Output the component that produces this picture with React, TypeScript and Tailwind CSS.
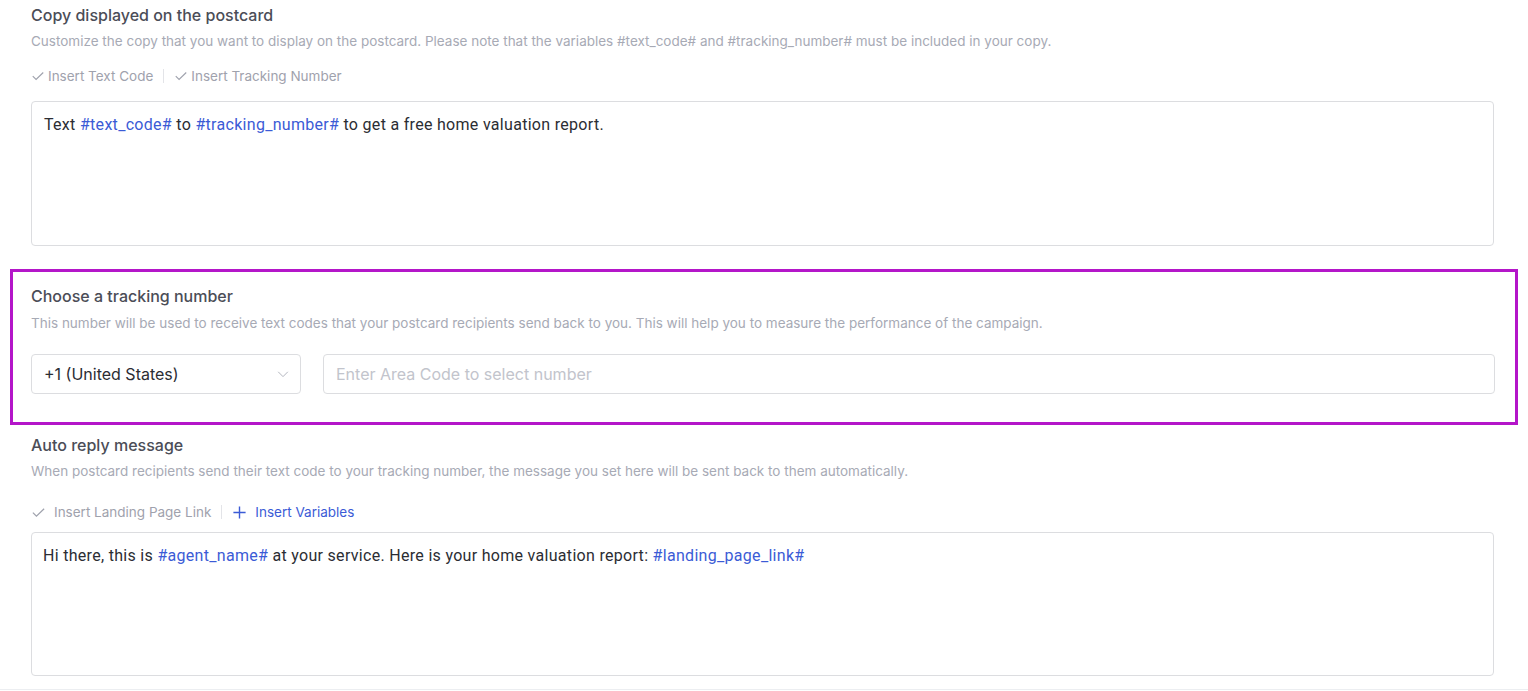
import React from "react";

const CheckIcon: React.FC<{ className?: string }> = ({ className }) => (
  <svg viewBox="0 0 16 16" className={className} fill="none" stroke="currentColor" strokeWidth="1.3">
    <path d="M2 8.2l3.8 3.8L14 4" />
  </svg>
);

const PlusIcon: React.FC<{ className?: string }> = ({ className }) => (
  <svg viewBox="0 0 16 16" className={className} fill="none" stroke="currentColor" strokeWidth="1.5">
    <path d="M8 1.5v13M1.5 8h13" />
  </svg>
);

const ChevronDown: React.FC<{ className?: string }> = ({ className }) => (
  <svg viewBox="0 0 16 16" className={className} fill="none" stroke="currentColor" strokeWidth="1.1">
    <path d="M2.5 5.5L8 11l5.5-5.5" />
  </svg>
);

const Var: React.FC<{ children: React.ReactNode }> = ({ children }) => (
  <span className="text-[#3b5bd6]">{children}</span>
);

const SectionHeader: React.FC<{ title: string; desc: string; gap: string }> = ({ title, desc, gap }) => (
  <div>
    <h3 className="text-[16px] leading-[20px] font-medium text-[#4b4d57]">{title}</h3>
    <p className={`${gap} text-[13.5px] leading-[18px] text-[#a7aab5]`}>{desc}</p>
  </div>
);

export default function App() {
  return (
    <div className="min-h-[691px] bg-white font-['Inter',sans-serif]">
      <div className="px-[31px] pt-[5px] pr-[34px]">
        <SectionHeader
          gap="mt-[7px]"
          title="Copy displayed on the postcard"
          desc="Customize the copy that you want to display on the postcard. Please note that the variables #text_code# and #tracking_number# must be included in your copy."
        />
        <div className="mt-[17px] flex items-center text-[13.5px] leading-[18px] text-[#9fa2ad]">
          <span className="flex items-center gap-[3px]">
            <CheckIcon className="w-[14px] h-[14px]" />
            Insert Text Code
          </span>
          <span className="mx-[10px] h-[14px] w-px bg-[#e3e4e8]" />
          <span className="flex items-center gap-[3px]">
            <CheckIcon className="w-[14px] h-[14px]" />
            Insert Tracking Number
          </span>
        </div>
        <div className="mt-[16px] h-[145px] rounded-[4px] border border-[#dcdde0] px-[12px] py-[11px] font-['Roboto',sans-serif] text-[16px] leading-[24px] tracking-[0.3px] text-[#2b2d33]">
          Text <Var>#text_code#</Var> to <Var>#tracking_number#</Var> to get a free home valuation report.
        </div>
      </div>

      <div className="mx-[10px] mt-[23px] border-[3px] border-[#b416c9] px-[18px] pt-[14px] pb-[28px] pr-[20px]">
        <SectionHeader
          gap="mt-[8px]"
          title="Choose a tracking number"
          desc="This number will be used to receive text codes that your postcard recipients send back to you. This will help you to measure the performance of the campaign."
        />
        <div className="mt-[22px] flex gap-[22px]">
          <div className="flex h-[40px] w-[270px] shrink-0 items-center justify-between rounded-[4px] border border-[#dcdde0] pl-[12px] pr-[10px] text-[16px] text-[#2b2d33]">
            <span>+1 (United States)</span>
            <ChevronDown className="w-[14px] h-[14px] text-[#b0b3bc]" />
          </div>
          <div className="flex h-[40px] flex-1 items-center rounded-[4px] border border-[#dcdde0] px-[12px] text-[16px] text-[#c2c4cc]">
            Enter Area Code to select number
          </div>
        </div>
      </div>

      <div className="px-[31px] pt-[10px] pr-[34px]">
        <SectionHeader
          gap="mt-[7px]"
          title="Auto reply message"
          desc="When postcard recipients send their text code to your tracking number, the message you set here will be sent back to them automatically."
        />
        <div className="mt-[23px] flex items-center text-[13.5px] leading-[18px]">
          <span className="flex items-center gap-[8px] text-[#9fa2ad]">
            <CheckIcon className="w-[15px] h-[15px]" />
            Insert Landing Page Link
          </span>
          <span className="mx-[10px] h-[14px] w-px bg-[#e3e4e8]" />
          <span className="flex items-center gap-[8px] text-[#3b5bd6]">
            <PlusIcon className="w-[15px] h-[15px]" />
            Insert Variables
          </span>
        </div>
        <div className="mt-[11px] h-[144px] rounded-[4px] border border-[#dcdde0] px-[11px] py-[11px] font-['Roboto',sans-serif] text-[16px] leading-[24px] tracking-[0.3px] text-[#2b2d33]">
          Hi there, this is <Var>#agent_name#</Var> at your service. Here is your home valuation report:{" "}
          <Var>#landing_page_link#</Var>
        </div>
      </div>
      <div className="mt-[13px] border-t border-[#eceef1]" />
    </div>
  );
}
